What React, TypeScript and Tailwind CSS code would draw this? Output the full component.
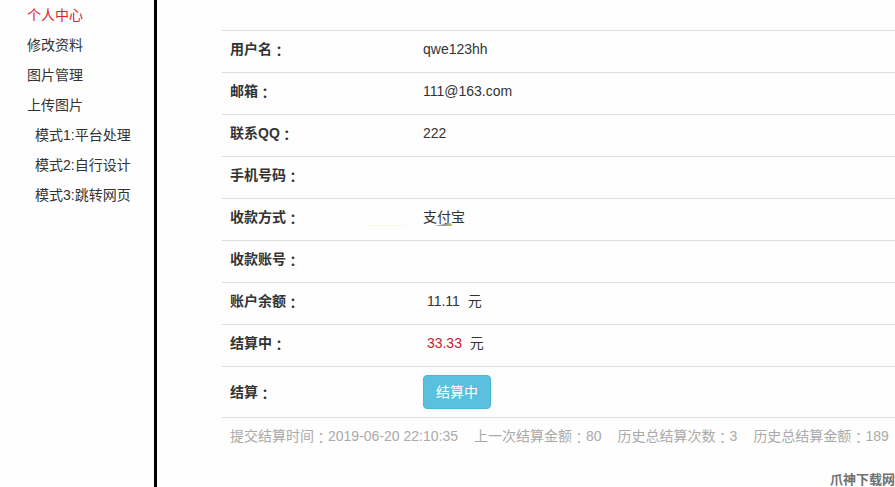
import React from 'react'

const menu = [
  { label: '个人中心', active: true },
  { label: '修改资料' },
  { label: '图片管理' },
  { label: '上传图片' },
  { label: '模式1:平台处理', sub: true },
  { label: '模式2:自行设计', sub: true },
  { label: '模式3:跳转网页', sub: true },
]

// full-width colon, centred in its box
const Colon = () => (
  <span className="inline-block align-[-2px] leading-4 font-['Noto_Sans_CJK_TC',sans-serif]">：</span>
)

const Sidebar = () => {
  return (
    <nav className="w-[157px] shrink-0 border-r-3 border-black">
      <ul>
        {menu.map((item) => (
          <li key={item.label} className={item.sub ? 'pl-[35px]' : 'pl-[27px]'}>
            <a
              href="#"
              className={`block leading-[30px] ${item.active ? 'text-[#d9232e]' : 'text-[#333]'}`}
            >
              {item.label}
            </a>
          </li>
        ))}
      </ul>
    </nav>
  )
}

const Row = ({ label, children }: { label: string; children?: React.ReactNode }) => {
  return (
    <tr className="border-t border-[#ddd]">
      <th scope="row" className="w-[193px] px-2 pt-2 pb-[13px] text-left font-bold">
        {label}
        <Colon />
      </th>
      <td className="px-2 pt-2 pb-[13px]">{children}</td>
    </tr>
  )
}

const Stat = ({ label, value }: { label: string; value: string }) => (
  <span>
    {label}
    <Colon />
    {value}
  </span>
)

const Smudge = () => (
  <svg
    className="absolute -left-14 top-3 pointer-events-none"
    width="170"
    height="18"
    viewBox="0 0 170 18"
    aria-hidden="true"
  >
    <path d="M0 4H40V5H0z" fill="#fbf8ea" />
    <path d="M35 17H170V18H35z" fill="#fefcf3" />
    <path d="M68 5L81 2L84 5z" fill="#999c94" />
    <path d="M80 3L84 2L85 5H81z" fill="#b5b45c" />
  </svg>
)

const App = () => {
  return (
    <div className="relative flex min-h-screen overflow-hidden bg-[#fefefe] text-sm leading-5 text-[#333] font-['Liberation_Sans','Noto_Sans_CJK_SC',sans-serif]">
      <Sidebar />
      <main className="min-w-0 flex-1 pl-[65px] pt-[30px]">
        <table className="w-full table-fixed border-collapse">
          <tbody>
            <Row label="用户名">qwe123hh</Row>
            <Row label="邮箱">111@163.com</Row>
            <Row label="联系QQ">222</Row>
            <Row label="手机号码" />
            <Row label="收款方式">
              <span className="relative">
                支付宝
                <Smudge />
              </span>
            </Row>
            <Row label="收款账号" />
            <Row label="账户余额">&nbsp;11.11&nbsp;&nbsp;元</Row>
            <Row label="结算中">
              &nbsp;<span className="text-[#c9202e]">33.33</span>&nbsp;&nbsp;元
            </Row>
            <tr className="border-t border-[#ddd]">
              <th scope="row" className="px-2 text-left font-bold">
                结算
                <Colon />
              </th>
              <td className="p-2">
                <button
                  type="button"
                  className="block rounded border border-[#46b8da] bg-[#5bc0de] px-3 py-1.5 text-white"
                >
                  结算中
                </button>
              </td>
            </tr>
            <tr className="border-t border-[#ddd]">
              <td colSpan={2} className="p-2 text-[#aaa]">
                <div className="flex gap-4 whitespace-nowrap">
                  <Stat label="提交结算时间" value="2019-06-20 22:10:35" />
                  <Stat label="上一次结算金额" value="80" />
                  <Stat label="历史总结算次数" value="3" />
                  <Stat label="历史总结算金额" value="189" />
                </div>
              </td>
            </tr>
          </tbody>
        </table>
      </main>
      <div className="absolute right-0 bottom-0 text-[13px] leading-3.5 font-bold text-[#707070]">
        爪神下载网
      </div>
    </div>
  )
}

export default App
